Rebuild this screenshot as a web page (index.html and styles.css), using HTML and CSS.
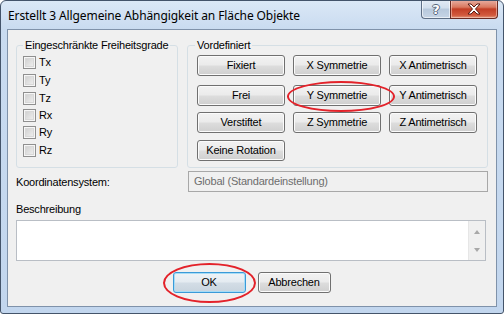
FILE: index.html
```html
<!DOCTYPE html>
<html>
<head>
<meta charset="utf-8">
<link rel="stylesheet" href="styles.css">
</head>
<body>
<div class="window">
  <div class="titlebar">
    <span class="title">Erstellt 3 Allgemeine Abhängigkeit an Fläche Objekte</span>
    <div class="caption-buttons">
      <div class="cap-btn help"><span class="help-glyph">?</span></div>
      <div class="cap-btn close">
        <svg width="16" height="12" viewBox="0 0 16 12"><path d="M2 1h3l3 3 3-3h3l-4.5 5 4.5 5h-3l-3-3-3 3H2l4.5-5z" fill="#fff" stroke="#5a1a12" stroke-width="1" stroke-linejoin="round"/></svg>
      </div>
    </div>
  </div>
  <div class="client">
    <div class="groups">
      <fieldset class="group dof">
        <legend>Eingeschränkte Freiheitsgrade</legend>
        <div class="check-list">
          <label class="check"><span class="box"></span>Tx</label>
          <label class="check"><span class="box"></span>Ty</label>
          <label class="check"><span class="box"></span>Tz</label>
          <label class="check"><span class="box"></span>Rx</label>
          <label class="check"><span class="box"></span>Ry</label>
          <label class="check"><span class="box"></span>Rz</label>
        </div>
      </fieldset>
      <fieldset class="group preset">
        <legend>Vordefiniert</legend>
        <div class="btn-grid">
          <button class="btn">Fixiert</button>
          <button class="btn">X Symmetrie</button>
          <button class="btn">X Antimetrisch</button>
          <button class="btn">Frei</button>
          <button class="btn">Y Symmetrie</button>
          <button class="btn">Y Antimetrisch</button>
          <button class="btn">Verstiftet</button>
          <button class="btn">Z Symmetrie</button>
          <button class="btn">Z Antimetrisch</button>
          <button class="btn">Keine Rotation</button>
        </div>
      </fieldset>
    </div>
    <div class="field-row">
      <span class="field-label">Koordinatensystem:</span>
      <div class="combo">Global (Standardeinstellung)</div>
    </div>
    <div class="desc-label">Beschreibung</div>
    <div class="desc">
      <div class="scroll"><span class="arrow up"></span><span class="arrow down"></span></div>
    </div>
    <div class="actions">
      <button class="btn action default">OK</button>
      <button class="btn action">Abbrechen</button>
    </div>
  </div>
  <div class="mark mark-y"></div>
  <div class="mark mark-ok"></div>
</div>
</body>
</html>
```
FILE: styles.css
```css
* { box-sizing: border-box; }
html, body { margin: 0; padding: 0; background: #fff; }
body { font-family: "Liberation Sans", Arial, sans-serif; font-size: 11px; letter-spacing: -0.2px; color: #000; }

.window {
  position: relative;
  width: 504px;
  height: 314px;
  border: 1px solid #44546a;
  border-radius: 6px 6px 3px 3px;
  background: linear-gradient(#dbe8f6 0px, #c9dbf0 28px, #c2d6ee 100%);
  overflow: hidden;
}

.titlebar {
  height: 28px;
  display: flex;
  align-items: flex-start;
  justify-content: space-between;
  padding-left: 7px;
  padding-right: 5px;
}
.title {
  font-family: "Noto Sans", "Open Sans", sans-serif;
  font-size: 12px;
  line-height: 16px;
  margin-top: 7px;
  letter-spacing: -0.1px;
  color: #000;
}
.caption-buttons { display: flex; margin-top: -1px; }
.cap-btn {
  height: 19px;
  border: 1px solid #5e6f86;
  border-top: none;
  display: flex;
  align-items: center;
  justify-content: center;
}
.help {
  width: 29px;
  border-radius: 0 0 0 4px;
  border-right: none;
  background: linear-gradient(#e3ebf5 0%, #d2deec 45%, #b7c8dc 50%, #c6d5e6 100%);
  box-shadow: inset 0 0 0 1px rgba(255,255,255,0.6);
}
.help-glyph {
  font-family: "DejaVu Sans", sans-serif;
  font-weight: bold;
  font-size: 13px;
  line-height: 13px;
  color: #fff;
  letter-spacing: 0;
  text-shadow: 1px 0 0 #56657a, -1px 0 0 #56657a, 0 1px 0 #56657a, 0 -1px 0 #56657a;
}
.close {
  width: 48px;
  border-radius: 0 0 4px 0;
  border-color: #6a2a22;
  background: linear-gradient(#e8b0a4 0%, #d9785f 40%, #c23e25 50%, #d25a3e 85%, #e09a7e 100%);
  box-shadow: inset 0 0 0 1px rgba(255,220,210,0.5);
}

.client {
  margin: 0 6px;
  height: 278px;
  border: 1px solid #7f92aa;
  background: #f0f0f0;
}

.groups {
  display: flex;
  gap: 9px;
  padding: 9px 8px 0 8px;
  height: 138px;
}
.group {
  margin: 0;
  min-width: 0;
  height: 129px;
  border: 1px solid #d5dfe5;
  border-radius: 3px;
}
.group legend {
  padding: 0 2px;
  line-height: 13px;
  font-size: 11px;
  white-space: nowrap;
}
.dof { width: 162px; padding: 1px 6px 0 6px; }
.preset { width: 301px; padding: 3px 9px 0 9px; }
.preset legend { margin-left: -2px; }

.check-list {
  display: grid;
  grid-template-rows: 18px 18px 18px 17px 17px 18px;
}
.check { display: flex; align-items: center; gap: 3px; line-height: 13px; }
.box {
  width: 13px;
  height: 13px;
  border: 1px solid #8f8f8f;
  background: linear-gradient(135deg, #cbcbcb, #f4f4f4);
  box-shadow: inset 0 0 0 1px #f6f6f6, inset 0 0 0 2px #d8d8d8;
}

.btn-grid {
  display: grid;
  grid-template-columns: 88px 88px 88px;
  grid-template-rows: 30px 27px 28px 21px;
  column-gap: 8px;
  align-items: start;
}
.btn {
  font-family: inherit;
  font-size: 11px;
  letter-spacing: -0.2px;
  color: #000;
  height: 21px;
  padding: 0;
  border: 1px solid #707070;
  border-radius: 3px;
  background: linear-gradient(#f2f2f2 0%, #ebebeb 48%, #dddddd 52%, #cfcfcf 100%);
  box-shadow: inset 0 0 0 1px #fbfbfb;
  line-height: 17px;
}

.field-row {
  display: flex;
  align-items: center;
  margin-top: 3px;
  padding-left: 8px;
  height: 21px;
}
.field-label { width: 172px; }
.combo {
  width: 300px;
  height: 21px;
  border: 1px solid #a8a8a8;
  background: #f0f0f0;
  color: #6d6d6d;
  padding-left: 5px;
  line-height: 19px;
}

.desc-label { margin: 11px 0 0 8px; line-height: 13px; }
.desc {
  margin: 4px 0 0 8px;
  width: 470px;
  height: 41px;
  border: 1px solid #b9bec5;
  background: #fff;
  display: flex;
  justify-content: flex-end;
}
.scroll {
  width: 17px;
  height: 39px;
  background: #f0f0f0;
  border-left: 1px solid #e6e6e6;
  display: flex;
  flex-direction: column;
  justify-content: space-between;
  align-items: center;
  padding: 9px 0 8px;
}
.arrow { width: 0; height: 0; border-left: 3.5px solid transparent; border-right: 3.5px solid transparent; }
.arrow.up { border-bottom: 4px solid #a8a8a8; }
.arrow.down { border-top: 4px solid #a8a8a8; }

.actions {
  display: flex;
  justify-content: center;
  gap: 12px;
  margin-top: 11px;
  padding-right: 1px;
}
.action { width: 73px; }
.default {
  border-color: #3a9ad8;
  background: linear-gradient(#eef3f7 0%, #e4ebf1 48%, #d3dde6 52%, #c8d4de 100%);
  box-shadow: inset 0 0 0 1px #a6dcf6;
}

.mark {
  position: absolute;
  border: 2px solid #e3222a;
  border-radius: 50%;
}
.mark-y { left: 286px; top: 80px; width: 108px; height: 31px; }
.mark-ok { left: 162px; top: 262px; width: 93px; height: 40px; }
```
